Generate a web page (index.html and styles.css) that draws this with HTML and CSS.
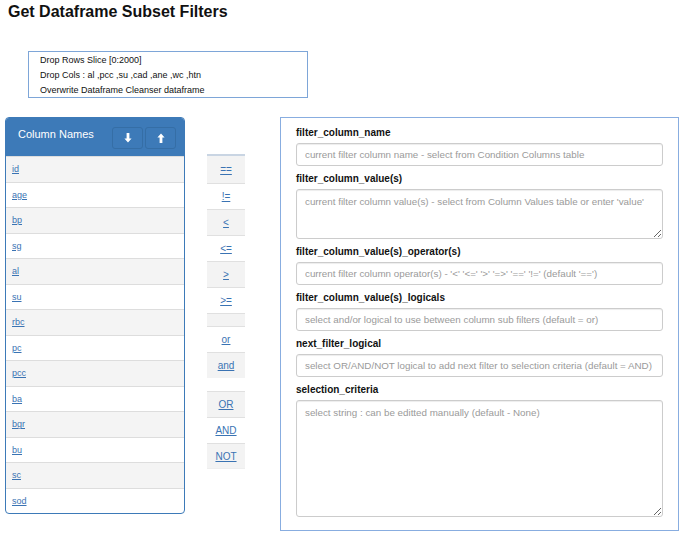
FILE: index.html
```html
<!DOCTYPE html>
<html>
<head>
<meta charset="utf-8">
<link rel="stylesheet" href="styles.css">
</head>
<body>
<h1 class="title">Get Dataframe Subset Filters</h1>
<div class="drop-box">
  <div class="drop-line">Drop Rows Slice [0:2000]</div>
  <div class="drop-line">Drop Cols : al ,pcc ,su ,cad ,ane ,wc ,htn</div>
  <div class="drop-line">Overwrite Dataframe Cleanser dataframe</div>
</div>
<div class="main">
  <div class="col-panel">
    <div class="col-head">
      <span class="col-title">Column Names</span>
      <div class="col-btns">
        <button class="arrow-btn" type="button"><svg width="8" height="10" viewBox="0 0 8 10"><path d="M2.6 0h2.8v5.4h2.2L4 9.6 0.4 5.4h2.2z" fill="#fff"/></svg></button>
        <button class="arrow-btn" type="button"><svg width="8" height="10" viewBox="0 0 8 10"><path d="M2.6 10h2.8V4.6h2.2L4 0.4 0.4 4.6h2.2z" fill="#fff"/></svg></button>
      </div>
    </div>
    <div class="col-row"><a href="#">id</a></div>
    <div class="col-row"><a href="#">age</a></div>
    <div class="col-row"><a href="#">bp</a></div>
    <div class="col-row"><a href="#">sg</a></div>
    <div class="col-row"><a href="#">al</a></div>
    <div class="col-row"><a href="#">su</a></div>
    <div class="col-row"><a href="#">rbc</a></div>
    <div class="col-row"><a href="#">pc</a></div>
    <div class="col-row"><a href="#">pcc</a></div>
    <div class="col-row"><a href="#">ba</a></div>
    <div class="col-row"><a href="#">bgr</a></div>
    <div class="col-row"><a href="#">bu</a></div>
    <div class="col-row"><a href="#">sc</a></div>
    <div class="col-row"><a href="#">sod</a></div>
  </div>
  <div class="ops">
    <div class="ops-group first">
      <div class="op gray"><a href="#">==</a></div>
      <div class="op"><a href="#">!=</a></div>
      <div class="op gray"><a href="#">&lt;</a></div>
      <div class="op"><a href="#">&lt;=</a></div>
      <div class="op gray"><a href="#">&gt;</a></div>
      <div class="op"><a href="#">&gt;=</a></div>
      <div class="op gray short"></div>
      <div class="op"><a href="#">or</a></div>
      <div class="op gray"><a href="#">and</a></div>
    </div>
    <div class="ops-group second">
      <div class="op gray"><a href="#">OR</a></div>
      <div class="op"><a href="#">AND</a></div>
      <div class="op gray last"><a href="#">NOT</a></div>
    </div>
  </div>
  <div class="form-panel">
    <div class="field">
      <label class="label">filter_column_name</label>
      <input class="input" type="text" placeholder="current filter column name - select from Condition Columns table">
    </div>
    <div class="field">
      <label class="label">filter_column_value(s)</label>
      <textarea class="input area-sm" placeholder="current filter column value(s) - select from Column Values table or enter 'value'"></textarea>
    </div>
    <div class="field">
      <label class="label">filter_column_value(s)_operator(s)</label>
      <input class="input" type="text" placeholder="current filter column operator(s) - '<' '<=' '>' '=>' '==' '!=' (default '==')">
    </div>
    <div class="field">
      <label class="label">filter_column_value(s)_logicals</label>
      <input class="input" type="text" placeholder="select and/or logical to use between column sub filters (default = or)">
    </div>
    <div class="field">
      <label class="label">next_filter_logical</label>
      <input class="input" type="text" placeholder="select OR/AND/NOT logical to add next filter to selection criteria (default = AND)">
    </div>
    <div class="field">
      <label class="label">selection_criteria</label>
      <textarea class="input area-lg" placeholder="select string : can be editted manually (default - None)"></textarea>
    </div>
  </div>
</div>
</body>
</html>
```
FILE: styles.css
```css
* { box-sizing: border-box; }
html, body { margin: 0; padding: 0; background: #fff; }
body {
  font-family: "Liberation Sans", Arial, sans-serif;
  color: #000;
  width: 686px;
}
.title {
  margin: 0;
  padding: 3px 0 0 8px;
  font-size: 16px;
  line-height: 18px;
  font-weight: bold;
  color: #111;
}
.drop-box {
  margin: 30px 0 0 28px;
  width: 280px;
  height: 47px;
  border: 1px solid #7ea6d8;
  padding: 1px 0 0 11px;
}
.drop-line {
  font-size: 9px;
  line-height: 15px;
  color: #111;
}
.main {
  display: flex;
  align-items: flex-start;
  margin-top: 19px;
  padding-left: 5px;
}
.col-panel {
  width: 180px;
  border: 1px solid #3d7ab8;
  border-radius: 4px;
  overflow: hidden;
  background: #fff;
}
.col-head {
  height: 38px;
  background: #3d7ab8;
  display: flex;
  align-items: center;
  justify-content: space-between;
  padding: 0 8px 0 12px;
}
.col-title {
  color: #fff;
  font-size: 11px;
  line-height: 14px;
  position: relative;
  top: -3px;
}
.col-btns {
  display: flex;
  gap: 2px;
  margin-top: 2px;
}
.arrow-btn {
  width: 31px;
  height: 22px;
  padding: 0;
  margin: 0;
  border: 1px solid #356ea6;
  border-radius: 3px;
  background: #3d7ab8;
  display: flex;
  align-items: center;
  justify-content: center;
}
.col-row {
  height: 25.5px;
  border-top: 1px solid #dddddd;
  padding-left: 6px;
  display: flex;
  align-items: center;
  font-size: 9px;
}
.col-row:nth-child(even) { background: #f4f4f4; }
.col-row a, .op a {
  color: #3a73b3;
  text-decoration: underline;
}
.ops {
  width: 38px;
  margin-left: 22px;
  margin-top: 37px;
}
.ops-group.first { border-top: 2px solid #c9d5e3; }
.ops-group.second { margin-top: 13px; }
.op {
  height: 26px;
  border-top: 1px solid #e0e0e0;
  display: flex;
  align-items: center;
  justify-content: center;
  font-size: 10px;
}
.ops-group.first .op:first-child { border-top: none; height: 27px; }
.op.gray { background: #f3f3f3; }
.op.short { height: 13px; }
.op.last { border-bottom: 1px solid #eeeeee; }
.form-panel {
  width: 399px;
  margin-left: 35px;
  border: 1px solid #88ade0;
  padding: 2px 15px 11px 15px;
  height: 414px;
}
.field { display: block; }
.label {
  display: block;
  font-size: 10px;
  line-height: 14px;
  font-weight: bold;
  color: #111;
  margin: 6px 0 3px;
}
.input {
  display: block;
  width: 367px;
  height: 23px;
  border: 1px solid #cccccc;
  border-radius: 3px;
  box-shadow: inset 0 1px 1px rgba(0, 0, 0, 0.075);
  padding: 0 4px 0 8px;
  font-family: "Liberation Sans", Arial, sans-serif;
  font-size: 9.8px;
  color: #555;
  background: #fff;
  margin: 0;
}
.input::placeholder { color: #9a9a9a; }
textarea.input {
  resize: vertical;
  padding-top: 6px;
  line-height: 12px;
}
.area-sm { height: 50px; }
.area-lg { height: 117px; }
```
